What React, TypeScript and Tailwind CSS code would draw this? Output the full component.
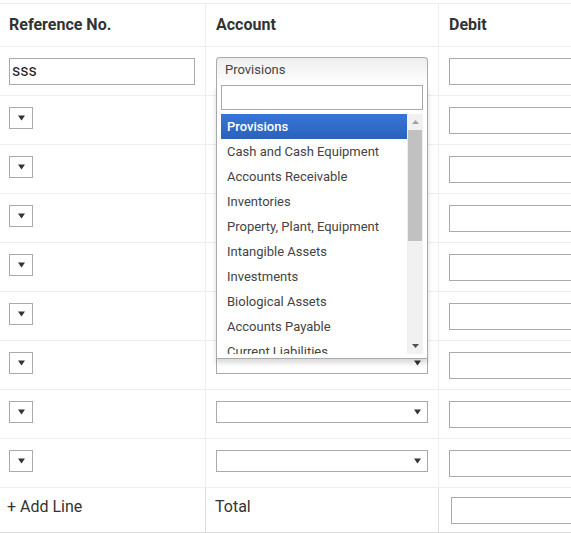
import React from "react";

const accounts = [
  "Provisions",
  "Cash and Cash Equipment",
  "Accounts Receivable",
  "Inventories",
  "Property, Plant, Equipment",
  "Intangible Assets",
  "Investments",
  "Biological Assets",
  "Accounts Payable",
  "Current Liabilities",
];

function Arrow({ className = "" }: { className?: string }) {
  return (
    <svg width="7" height="6" viewBox="0 0 7 6" className={className}>
      <path d="M0 0.5 H7 L3.5 5.5 Z" fill="#333" />
    </svg>
  );
}

function SmallSelect() {
  return (
    <div className="mb-[4px] flex h-[22px] w-[24px] items-center justify-center border border-[#aaa] bg-white">
      <Arrow />
    </div>
  );
}

function AccountSelect() {
  return (
    <div className="mb-[4px] flex h-[22px] w-[212px] items-center justify-end border border-[#aaa] bg-white pr-[6px]">
      <Arrow />
    </div>
  );
}

function TextBox({ value = "", w = "w-[186px]" }: { value?: string; w?: string }) {
  return (
    <div className={`flex h-[27px] ${w} items-center border border-[#aaa] bg-white pl-[2px] text-[16px] text-[#222]`}>
      {value}
    </div>
  );
}

function Dropdown() {
  return (
    <div className="absolute left-[216px] top-[57px] w-[212px] font-['Roboto',sans-serif] text-[13px] text-[#444]">
      <div className="flex h-[28px] items-start rounded-t-[4px] border border-b-0 border-[#aaa] bg-gradient-to-b from-[#eee] to-white pl-[8px] pt-[2px]">
        Provisions
      </div>
      <div className="border border-t-0 border-[#aaa] bg-white px-[4px] pb-[4px] shadow-[0_4px_5px_rgba(0,0,0,0.15)]">
        <div className="h-[25px] border border-[#aaa]" />
        <div className="mt-[4px] flex h-[240px] overflow-hidden">
          <div className="flex-1">
            {accounts.map((a, i) => (
              <div
                key={a}
                className={
                  i === 0
                    ? "flex h-[25px] items-center bg-gradient-to-b from-[#3875d7] to-[#2a62bc] pl-[6px] font-medium text-white"
                    : "flex h-[25px] items-center pl-[6px]"
                }
              >
                {a}
              </div>
            ))}
          </div>
          <div className="flex w-[16px] flex-col items-center bg-[#f1f1f1]">
            <div className="flex h-[16px] w-full items-center justify-center">
              <svg width="7" height="4" viewBox="0 0 7 4">
                <path d="M0 4 H7 L3.5 0 Z" fill="#a3a3a3" />
              </svg>
            </div>
            <div className="h-[111px] w-[14px] bg-[#c1c1c1]" />
            <div className="flex-1" />
            <div className="flex h-[16px] w-full items-center justify-center">
              <svg width="7" height="4" viewBox="0 0 7 4">
                <path d="M0 0 H7 L3.5 4 Z" fill="#505050" />
              </svg>
            </div>
          </div>
        </div>
      </div>
    </div>
  );
}

export default function App() {
  const rows = Array.from({ length: 8 });
  return (
    <div className="relative h-[533px] w-[571px] overflow-hidden bg-white pt-[3px] font-['Roboto',sans-serif] text-[#333]">
      <div className="w-[700px] border-t border-[#eee]">
        {/* header */}
        <div className="flex h-[43px] border-b border-[#eee] text-[16px] font-bold">
          <div className="flex w-[206px] items-center border-r border-[#eee] pl-[9px]">Reference No.</div>
          <div className="flex w-[233px] items-center border-r border-[#eee] pl-[10px]">Account</div>
          <div className="flex flex-1 items-center pl-[10px]">Debit</div>
        </div>

        {/* first row */}
        <div className="flex h-[49px] border-b border-[#eee]">
          <div className="flex w-[206px] items-center border-r border-[#eee] pl-[9px]">
            <TextBox value="sss" />
          </div>
          <div className="flex w-[233px] items-center border-r border-[#eee] pl-[10px]" />
          <div className="flex flex-1 items-center pl-[10px]">
            <TextBox w="w-[200px]" />
          </div>
        </div>

        {rows.map((_, i) => (
          <div key={i} className="flex h-[49px] border-b border-[#eee]">
            <div className="flex w-[206px] items-center border-r border-[#eee] pl-[9px]">
              <SmallSelect />
            </div>
            <div className="flex w-[233px] items-center border-r border-[#eee] pl-[10px]">
              <AccountSelect />
            </div>
            <div className="flex flex-1 items-center pl-[10px]">
              <TextBox w="w-[200px]" />
            </div>
          </div>
        ))}

        {/* footer */}
        <div className="flex h-[45px] border-b border-[#ddd] text-[16px]">
          <div className="flex w-[206px] items-center border-r border-[#ddd] pb-[6px] pl-[7px]">+ Add Line</div>
          <div className="flex w-[233px] items-center border-r border-[#ddd] pb-[6px] pl-[9px]">Total</div>
          <div className="flex flex-1 items-center pl-[12px]">
            <TextBox w="w-[200px]" />
          </div>
        </div>
      </div>

      <Dropdown />
    </div>
  );
}
